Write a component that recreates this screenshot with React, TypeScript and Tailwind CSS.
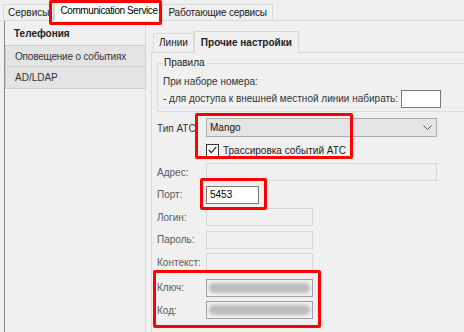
import React from "react";

const font = { fontFamily: '"Liberation Sans", Arial, sans-serif' };

const Field = ({ label, width, children, enabled, secret }: { label: string; width: string; children?: React.ReactNode; enabled?: boolean; secret?: boolean }) => {
  return (
    <div className="flex items-center h-[22.5px]">
      <div className="w-[49px] text-[#5a5a5a]">{label}</div>
      <div
        className={
          enabled
            ? `h-[18px] ${width} border border-[#7a7a7a] bg-white px-[3px] text-black leading-[16px]`
            : secret
            ? `h-[18px] ${width} border border-[#a0a0a0] bg-[#f0f0f0] relative overflow-hidden`
            : `h-[18px] ${width} border border-[#d6d6d6] bg-[#f0f0f0] relative overflow-hidden`
        }
      >
        {children}
      </div>
    </div>
  );
};

const Blurred = () => (
  <div className="absolute inset-[2px] flex items-center">
    <div className="h-[10px] w-full rounded-full bg-[#bdbdbd] blur-[1.5px]" />
  </div>
);

export default function App() {
  return (
    <div className="relative w-[464px] h-[332px] bg-[#f0f0f0] overflow-hidden text-[10px] text-black" style={font}>
      {/* top tabs */}
      <div className="flex items-end h-[21px] pl-[3px] border-b border-[#d9d9d9]">
        <div className="h-[16px] px-[4px] border border-b-0 border-[#d9d9d9] leading-[15px] text-[#222]">Сервисы</div>
        <div className="h-[21px] w-[108px] pl-[5px] bg-white border border-b-0 border-[#d9d9d9] leading-[20px] tracking-[-0.4px] -mb-px whitespace-nowrap">Communication Service</div>
        <div className="h-[16px] px-[5px] border border-b-0 border-[#d9d9d9] leading-[15px] text-[#222] tracking-[-0.2px]">Работающие сервисы</div>
      </div>

      <div className="flex h-[311px]">
        {/* left nav */}
        <div className="w-[142px] ml-[4px] border-l border-[#8a8a8a] flex flex-col">
          <div className="h-[24px] pl-[9px] flex items-center font-bold text-[#222] border-r border-[#d9d9d9]">Телефония</div>
          <div className="h-[22px] pl-[9px] flex items-center bg-[#e3e3e3] border border-[#cfcfcf] text-[#333] tracking-[-0.2px]">Оповещение о событиях</div>
          <div className="h-[22px] pl-[9px] flex items-center bg-[#e3e3e3] border border-t-0 border-[#cfcfcf] text-[#333]">AD/LDAP</div>
          <div className="flex-1 border-r border-[#d9d9d9]" />
        </div>

        {/* right content */}
        <div className="flex-1 pl-[5px] pt-[9px]">
          <div className="flex items-end h-[22px] pl-[2px]">
            <div className="h-[19px] px-[5px] border border-b-0 border-[#d9d9d9] leading-[18px] text-[#222]">Линии</div>
            <div className="h-[22px] px-[6px] border border-b-0 border-[#d9d9d9] leading-[21px] font-bold text-[#222] -mb-px bg-[#f0f0f0] relative">Прочие настройки</div>
          </div>
          <div className="h-[300px] border-l border-t border-[#d9d9d9] pl-[5px] pt-[8px]">
            {/* group box */}
            <div className="relative border border-r-0 border-[#dcdcdc] h-[49px] mt-[2px] pl-[5px] pt-[9px]">
              <div className="absolute -top-[7px] left-[5px] bg-[#f0f0f0] px-[1px] leading-[12px] text-[#222]">Правила</div>
              <div className="h-[17px] leading-[17px] text-[#333]">При наборе номера:</div>
              <div className="flex items-center h-[17px] text-[#333]">
                <span>- для доступа к внешней местной линии набирать:</span>
                <div className="ml-[3px] h-[18px] w-[40px] border border-[#7a7a7a] bg-white" />
              </div>
            </div>

            {/* type row */}
            <div className="flex items-start mt-[6px]">
              <div className="w-[49px] pt-[3px] text-[#333]">Тип АТС</div>
              <div className="flex flex-col">
                <div className="h-[19px] w-[231px] border border-[#adadad] bg-[#e5e5e5] flex items-center justify-between pl-[3px] pr-[4px] text-[#111]">
                  <span>Mango</span>
                  <svg width="9" height="6" viewBox="0 0 9 6" fill="none" stroke="#555" strokeWidth="1"><path d="M0.5 0.5 L4.5 4.5 L8.5 0.5" /></svg>
                </div>
                <div className="flex items-center mt-[6px] h-[14px]">
                  <div className="w-[13px] h-[13px] border border-[#333] bg-white flex items-center justify-center">
                    <svg width="9" height="8" viewBox="0 0 9 8" fill="none" stroke="#222" strokeWidth="1.2"><path d="M0.7 4 L3.3 6.6 L8.3 0.8" /></svg>
                  </div>
                  <span className="ml-[4px] text-[#222]">Трассировка событий АТС</span>
                </div>
              </div>
            </div>

            <div className="mt-[4px]">
              <Field label="Адрес:" width="w-[231px]" />
              <Field label="Порт:" width="w-[53px]" enabled>5453</Field>
              <Field label="Логин:" width="w-[107px]" />
              <Field label="Пароль:" width="w-[107px]" />
              <Field label="Контекст:" width="w-[107px]" />
              <div className="h-[3px]" />
              <Field label="Ключ:" width="w-[107px]" secret><Blurred /></Field>
              <Field label="Код:" width="w-[107px]" secret><Blurred /></Field>
            </div>
          </div>
        </div>
      </div>

      {/* red annotation boxes */}
      <div className="absolute left-[49px] top-0 w-[113px] h-[25px] border-[3px] border-[#ff0000] rounded-[2px]" />
      <div className="absolute left-[195px] top-[113px] w-[158px] h-[46px] border-[3px] border-[#ff0000] rounded-[2px]" />
      <div className="absolute left-[200px] top-[178px] w-[67px] h-[32px] border-[3px] border-[#ff0000] rounded-[2px]" />
      <div className="absolute left-[153px] top-[270px] w-[168px] h-[58px] border-[3px] border-[#ff0000] rounded-[2px]" />
    </div>
  );
}
